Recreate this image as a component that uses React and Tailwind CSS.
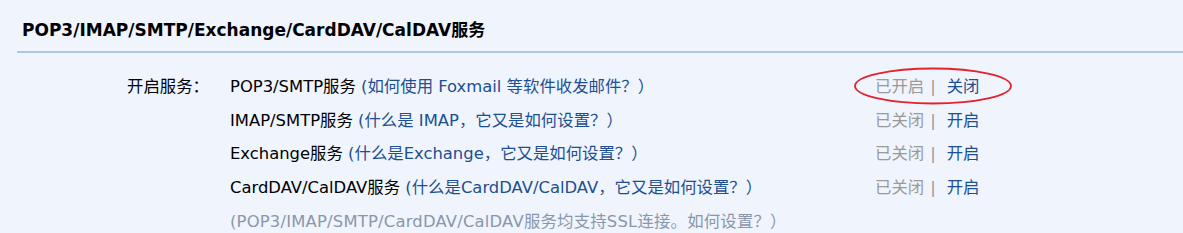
import React from "react";

const rows = [
  { name: "POP3/SMTP服务", link: "(如何使用 Foxmail 等软件收发邮件？）", on: true },
  { name: "IMAP/SMTP服务", link: "(什么是 IMAP，它又是如何设置？）", on: false },
  { name: "Exchange服务", link: "(什么是Exchange，它又是如何设置？）", on: false },
  { name: "CardDAV/CalDAV服务", link: "(什么是CardDAV/CalDAV，它又是如何设置？）", on: false },
];

export default function App() {
  return (
    <div
      className="w-[1183px] h-[233px] overflow-hidden bg-[#eff4fd] text-[#000]"
      style={{ fontFamily: '"DejaVu Sans", Verdana, "Noto Sans CJK SC", sans-serif' }}
    >
      <div className="pt-[18px] pl-[17px]">
        <div className="border-b-2 border-[#a8c8ea] pl-[5px] pb-[9px] text-[17px] leading-[24px] font-bold">
          POP3/IMAP/SMTP/Exchange/CardDAV/CalDAV服务
        </div>
      </div>
      <div className="flex pt-[17px] text-[16.4px]">
        <div className="w-[127px] shrink-0" />
        <div className="w-[103px] shrink-0 leading-[34px]">开启服务：</div>
        <div className="flex flex-col">
          {rows.map((r, i) => (
            <div key={i} className="flex leading-[33.7px]">
              <div className="w-[645px] shrink-0 whitespace-nowrap">
                {r.name} <span className="text-[#1d4f91]">{r.link}</span>
              </div>
              <div className="relative whitespace-nowrap text-[#9a9a9a]">
                {r.on ? "已开启" : "已关闭"}
                <span className="ml-[6px] mr-[11px]">|</span>
                <span className="text-[#1d4f91]">{r.on ? "关闭" : "开启"}</span>
                {r.on && (
                  <svg
                    className="absolute left-[-22px] top-[-4px]"
                    width="160"
                    height="40"
                    viewBox="0 0 160 40"
                  >
                    <ellipse cx="80" cy="20" rx="78" ry="17.5" fill="none" stroke="#e3222c" strokeWidth="1.8" />
                  </svg>
                )}
              </div>
            </div>
          ))}
          <div className="leading-[33.7px] whitespace-nowrap tracking-[0.2px] text-[#8a97aa]">
            (POP3/IMAP/SMTP/CardDAV/CalDAV服务均支持SSL连接。如何设置？）
          </div>
        </div>
      </div>
    </div>
  );
}
